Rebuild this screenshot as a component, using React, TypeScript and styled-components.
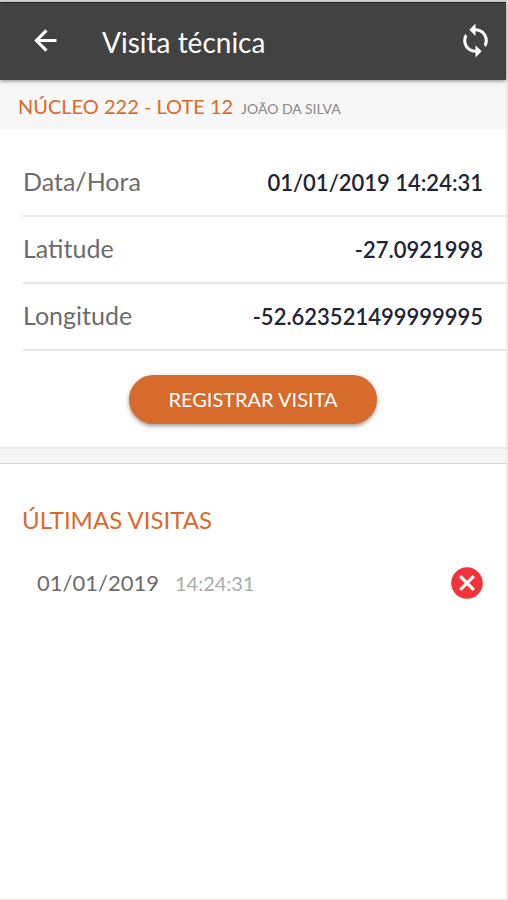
import React from "react";
import styled, { createGlobalStyle } from "styled-components";
import { MdSync, MdCancel } from "react-icons/md";

const GlobalStyle = createGlobalStyle`
  * { box-sizing: border-box; }
  body { margin: 0; background: #fff; font-family: Lato, "Liberation Sans", sans-serif; }
  button { font-family: inherit; border: 0; padding: 0; background: none; cursor: pointer; }
  h1, h2, dl, dt, dd, ul, p { margin: 0; padding: 0; font-weight: 400; }
`;

const Screen = styled.div`
  display: flex;
  flex-direction: column;
  min-height: 100vh;
  border-top: 2px solid #d8d8d8;
  border-right: 2px solid #ebebeb;
  border-bottom: 1px solid #e6e6e6;
`;

const Toolbar = styled.header`
  position: relative;
  display: flex;
  align-items: center;
  height: 78px;
  padding: 0 12px 2px 29px;
  border-top: 1px solid #222;
  background: #424242;
  color: #fff;
  box-shadow: 0 1px 4px rgba(0, 0, 0, 0.45);
`;

const Title = styled.h1`
  flex: 1;
  margin-left: 40px;
  padding-top: 2px;
  font-size: 28px;
  line-height: 32px;
`;

const IconButton = styled.button`
  display: flex;
  color: inherit;
`;

const Lot = styled.div`
  display: flex;
  align-items: baseline;
  gap: 8px;
  padding: 13px 18px 7px;
  background: #f7f7f7;
  line-height: 26px;
`;

const LotName = styled.h2`
  color: #d96a2b;
  font-size: 20px;
`;

const Owner = styled.p`
  color: #888;
  font-size: 14px;
`;

const Details = styled.dl`
  padding: 21px 0 0 23px;
`;

const Detail = styled.div`
  display: flex;
  justify-content: space-between;
  align-items: baseline;
  height: 67px;
  padding: 16px 23px 0 0;
  border-bottom: 2px solid #e6e6e6;
  line-height: 30px;
`;

const Label = styled.dt`
  color: #6c6c6c;
  font-size: 25px;
`;

const Value = styled.dd`
  && {
    color: #222433;
    font-size: 22px;
    font-weight: 600;
  }
`;

const Actions = styled.div`
  display: flex;
  justify-content: center;
  padding: 24px 0 23px;
`;

const RegisterButton = styled.button`
  && {
    height: 49px;
    padding: 0 39px 1px;
    border-radius: 25px;
    background: #d66b2c;
    color: #fff;
    font-size: 20px;
    box-shadow: 0 2px 4px rgba(0, 0, 0, 0.4);
  }
`;

const Divider = styled.div`
  height: 17px;
  background: #f6f6f6;
  border-top: 2px solid #ebebeb;
  border-bottom: 1px solid #d4d4d4;
`;

const History = styled.section`
  padding: 40px 22px;
`;

const Heading = styled.h2`
  color: #d96a2b;
  font-size: 24px;
  line-height: 32px;
`;

const Visits = styled.ul`
  padding: 28px 0 0 15px;
  list-style: none;
`;

const Visit = styled.li`
  display: flex;
  align-items: center;
  gap: 16px;
  line-height: 30px;
`;

const VisitDate = styled.span`
  color: #6c6c6c;
  font-size: 22px;
`;

const VisitTime = styled.span`
  flex: 1;
  color: #aaa;
  font-size: 20px;
`;

const RemoveButton = styled(IconButton)`
  && {
    margin-right: -2px;
    color: #f2333a;
  }
`;

const BackIcon = () => (
  <svg width="33" height="33" viewBox="0 0 24 24" fill="none" stroke="currentColor" strokeWidth="2.3" aria-hidden="true">
    <path d="M20 12H5.5M12.7 4.7L5.4 12l7.3 7.3" />
  </svg>
);

const details = [
  ["Data/Hora", "01/01/2019 14:24:31"],
  ["Latitude", "-27.0921998"],
  ["Longitude", "-52.623521499999995"],
];

export default function App() {
  return (
    <Screen>
      <GlobalStyle />
      <Toolbar>
        <IconButton aria-label="Voltar"><BackIcon /></IconButton>
        <Title>Visita técnica</Title>
        <IconButton aria-label="Sincronizar"><MdSync size={37} /></IconButton>
      </Toolbar>
      <Lot>
        <LotName>NÚCLEO 222 - LOTE 12</LotName>
        <Owner>JOÃO DA SILVA</Owner>
      </Lot>
      <Details>
        {details.map(([label, value]) => (
          <Detail key={label}>
            <Label>{label}</Label>
            <Value>{value}</Value>
          </Detail>
        ))}
      </Details>
      <Actions><RegisterButton>REGISTRAR VISITA</RegisterButton></Actions>
      <Divider />
      <History>
        <Heading>ÚLTIMAS VISITAS</Heading>
        <Visits>
          <Visit>
            <VisitDate>01/01/2019</VisitDate>
            <VisitTime>14:24:31</VisitTime>
            <RemoveButton aria-label="Remover visita"><MdCancel size={38} /></RemoveButton>
          </Visit>
        </Visits>
      </History>
    </Screen>
  );
}
